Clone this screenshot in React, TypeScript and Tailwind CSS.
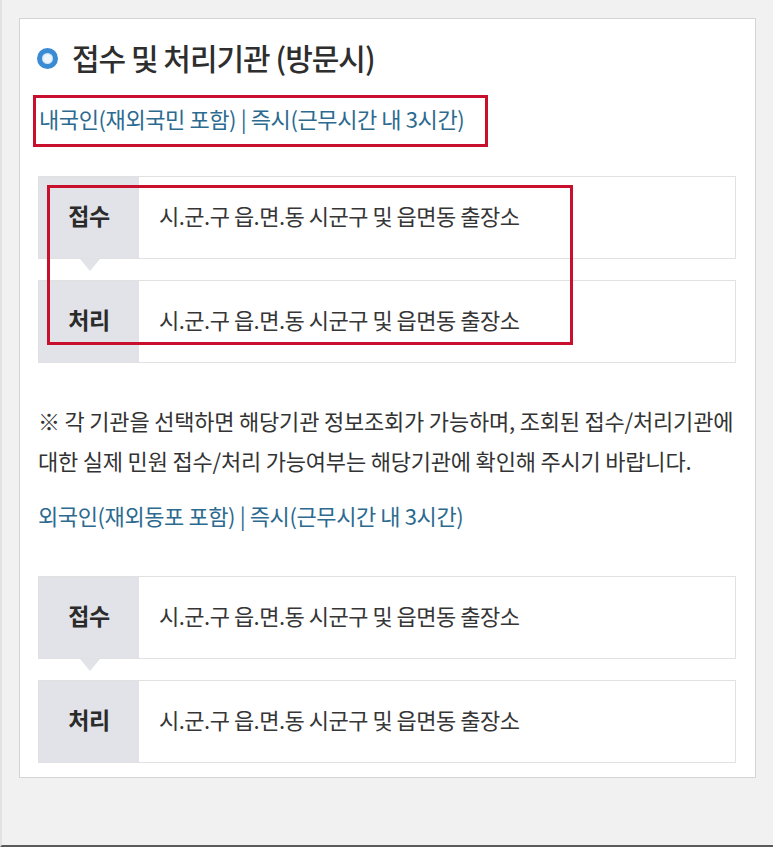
const font = {
  fontFamily: '"Noto Sans CJK KR", "Noto Sans", sans-serif',
};

function Row({ label, value }: { label: string; value: string }) {
  return (
    <div className="flex h-[83px] border border-[#e1e1e1] bg-white">
      <div className="flex w-[100px] shrink-0 items-center justify-center bg-[#e2e3e8] pb-[4px] text-[23px] font-bold tracking-[-0.5px] text-[#2b2b2b]">
        {label}
      </div>
      <div className="flex items-center pb-[4px] pl-[20px] text-[22px] tracking-[-0.5px] text-[#363636]">
        {value}
      </div>
    </div>
  );
}

function Table({ marked }: { marked?: boolean }) {
  const place = "시.군.구 읍.면.동 시군구 및 읍면동 출장소";
  return (
    <div className="relative flex flex-col gap-[21px]">
      <Row label="접수" value={place} />
      <div className="absolute left-[42px] top-[83px] h-0 w-0 border-x-[10px] border-t-[12px] border-x-transparent border-t-[#e2e3e8]" />
      <Row label="처리" value={place} />
      {marked && (
        <div className="absolute left-[9px] top-[9px] h-[160px] w-[526px] border-[3px] border-[#c8102e]" />
      )}
    </div>
  );
}

export default function App() {
  return (
    <div
      style={font}
      className="flex h-[847px] w-[773px] flex-col border-b-2 border-l-2 border-b-[#5a5a5a] border-l-[#e2e2e2] bg-[#f1f1f1] px-[17px] pt-[18px]"
    >
      <div className="flex h-[760px] flex-col border border-[#d4d4d4] bg-white pb-[14px] pl-[18px] pr-[19px] pt-[18px]">
        <div className="flex h-[40px] items-center">
          <span className="-ml-px mt-[3px] h-[21px] w-[21px] rounded-full border-[5px] border-[#3a8ad4] bg-[#eef6fd] shadow-[inset_0_0_2px_#8fc0ea]" />
          <h2 className="ml-[14px] text-[30px] font-medium tracking-[-1px] text-[#2e2e2e]">
            접수 및 처리기관 (방문시)
          </h2>
        </div>

        <div className="-ml-[5px] mt-[18px] flex h-[52px] w-[455px] items-center border-[3px] border-[#c8102e] pb-[5px] pl-[3px] text-[22px] tracking-[-0.4px] text-[#2c6a90]">
          내국인(재외국민 포함) | 즉시(근무시간 내 3시간)
        </div>

        <div className="mt-[29px]">
          <Table marked />
        </div>

        <p className="mt-[37px] whitespace-nowrap text-[22px] leading-[40px] tracking-[-0.2px] text-[#333]">
          ※ 각 기관을 선택하면 해당기관 정보조회가 가능하며, 조회된 접수/처리기관에
          <br />
          대한 실제 민원 접수/처리 가능여부는 해당기관에 확인해 주시기 바랍니다.
        </p>

        <div className="mt-[15px] text-[22px] leading-[40px] tracking-[-0.4px] text-[#2c6a90]">
          외국인(재외동포 포함) | 즉시(근무시간 내 3시간)
        </div>

        <div className="mt-[41px]">
          <Table />
        </div>
      </div>
    </div>
  );
}
